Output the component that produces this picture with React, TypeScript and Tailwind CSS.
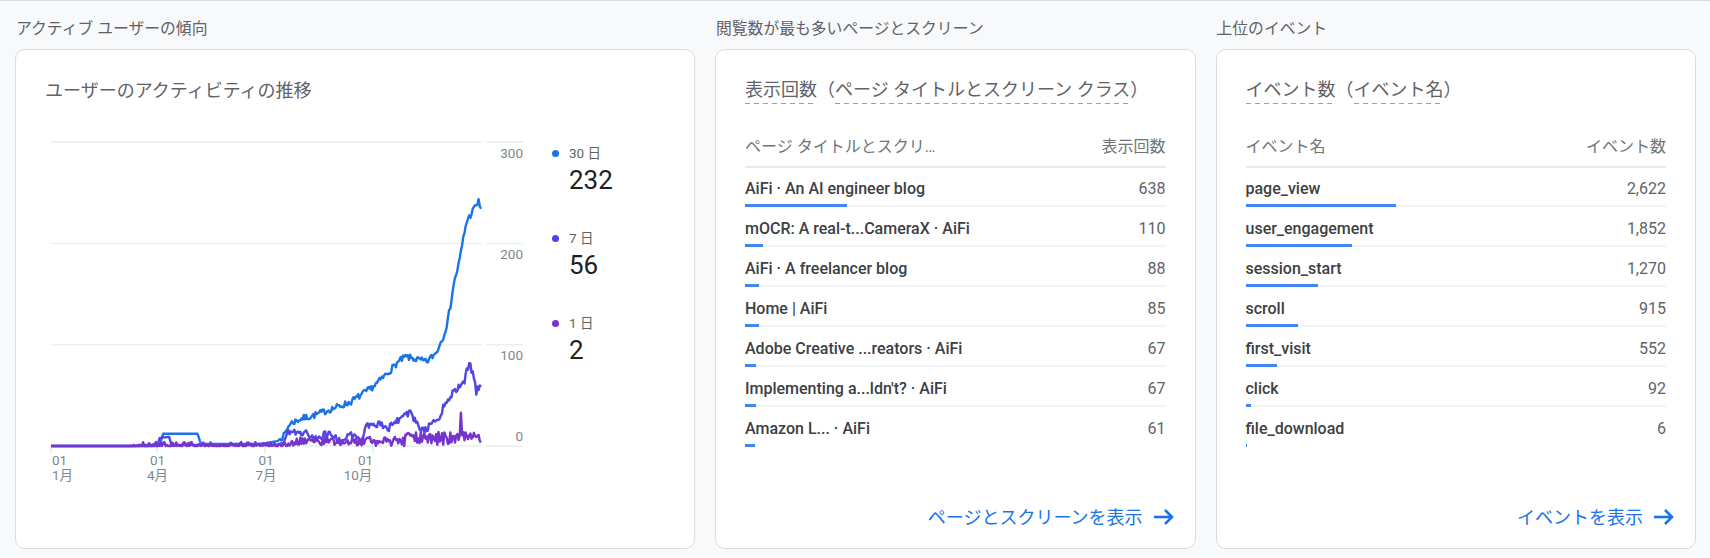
import type { ReactNode } from 'react';

type Row = { label: string; value: number };

const pages: Row[] = [
  { label: 'AiFi · An AI engineer blog', value: 638 },
  { label: 'mOCR: A real-t...CameraX · AiFi', value: 110 },
  { label: 'AiFi · A freelancer blog', value: 88 },
  { label: 'Home | AiFi', value: 85 },
  { label: 'Adobe Creative ...reators · AiFi', value: 67 },
  { label: "Implementing a...ldn't? · AiFi", value: 67 },
  { label: 'Amazon L... · AiFi', value: 61 },
];

const events: Row[] = [
  { label: 'page_view', value: 2622 },
  { label: 'user_engagement', value: 1852 },
  { label: 'session_start', value: 1270 },
  { label: 'scroll', value: 915 },
  { label: 'first_visit', value: 552 },
  { label: 'click', value: 92 },
  { label: 'file_download', value: 6 },
];

// chart geometry (svg coords)
const xd = (d: number) => 6 + (d * 430) / 364;
const yv = (v: number) => 316 - v * 1.013;

function rng(seed: number) {
  let a = seed;
  return () => {
    a = (a + 0x6d2b79f5) | 0;
    let t = Math.imul(a ^ (a >>> 15), 1 | a);
    t = (t + Math.imul(t ^ (t >>> 7), 61 | t)) ^ t;
    return ((t ^ (t >>> 14)) >>> 0) / 4294967296;
  };
}

function interp(keys: number[][], d: number) {
  for (let i = 1; i < keys.length; i++) {
    const [d0, v0] = keys[i - 1];
    const [d1, v1] = keys[i];
    if (d <= d1) return v0 + ((v1 - v0) * (d - d0)) / (d1 - d0 || 1);
  }
  return keys[keys.length - 1][1];
}

function series(keys: number[][], seed: number, amp: number) {
  const r = rng(seed);
  const pts: string[] = [];
  for (let d = 0; d < 365; d++) {
    const base = interp(keys, d);
    const n = d >= 195 && base > 3 ? (r() - 0.5) * 2 * amp * Math.min(1, base / 25 + 0.5) : 0;
    const v = Math.max(0, base + n);
    pts.push(`${xd(d).toFixed(1)},${yv(v).toFixed(1)}`);
  }
  return pts.join(' ');
}

const blue = series(
  [
    [0, 0], [71, 0], [74, 1], [92, 1], [95, 12], [124, 12], [127, 2], [176, 2], [183, 3], [192, 5],
    [197, 10], [202, 22], [212, 27], [222, 30], [236, 36], [246, 40], [253, 43], [262, 50], [270, 56],
    [276, 62], [285, 72], [293, 82], [300, 88], [308, 86], [318, 83], [326, 92], [332, 108], [336, 124],
    [341, 160], [346, 184], [349, 205], [352, 222], [356, 230], [360, 238], [362, 241], [364, 235],
  ],
  7,
  3.2,
);

const indigo = series(
  [
    [0, 0], [90, 0], [92, 8], [100, 9], [102, 1], [190, 1], [196, 3], [200, 12], [205, 14], [217, 13],
    [226, 6], [232, 12], [240, 10], [246, 2], [250, 10], [258, 12], [262, 2], [266, 20], [276, 22],
    [286, 18], [296, 28], [304, 33], [312, 18], [316, 14], [322, 22], [328, 26], [334, 44], [340, 52],
    [346, 58], [350, 64], [352, 78], [355, 80], [358, 66], [360, 54], [363, 59], [364, 57],
  ],
  19,
  3.4,
);

const purple = (() => {
  const r = rng(43);
  const pts: string[] = [];
  for (let d = 0; d < 365; d++) {
    let v = 0;
    if (d >= 70 && d < 200) v = r() < 0.55 ? 0 : r() * 4;
    else if (d >= 200 && d < 300) v = r() * 9;
    else if (d >= 300) v = 1 + r() * 13;
    if (d === 347) v = 33;
    pts.push(`${xd(d).toFixed(1)},${yv(v).toFixed(1)}`);
  }
  return pts.join(' ');
})();

function TrendChart() {
  return (
    <svg width={480} height={360} className="block shrink-0">
      {[300, 200, 100, 0].map((v) => (
        <g key={v}>
          <line x1={6} x2={436} y1={yv(v)} y2={yv(v)} stroke="#ebedf0" strokeWidth={1.5} />
          <line x1={441} x2={478} y1={yv(v)} y2={yv(v)} stroke="#ebedf0" strokeWidth={1.5} />
          <text
            x={478}
            y={v === 0 ? yv(v) - 5.3 : yv(v) + 15.6}
            textAnchor="end"
            fontSize={13.5}
            fill="#80868b"
          >
            {v}
          </text>
        </g>
      ))}
      {[6, 112, 220, 328].map((x) => (
        <line key={x} x1={x} x2={x} y1={316} y2={323} stroke="#dadce0" strokeWidth={1} />
      ))}
      <g fontSize={13.5} fill="#80868b">
        <text x={7} y={334.7}>01</text>
        <text x={7} y={349.7}>1月</text>
        <text x={112.5} y={334.7} textAnchor="middle">01</text>
        <text x={112.5} y={349.7} textAnchor="middle">4月</text>
        <text x={221} y={334.7} textAnchor="middle">01</text>
        <text x={221} y={349.7} textAnchor="middle">7月</text>
        <text x={320.5} y={334.7} textAnchor="middle">01</text>
        <text x={313} y={349.7} textAnchor="middle">10月</text>
      </g>
      <polyline points={blue} fill="none" stroke="#1a73e8" strokeWidth={2.4} strokeLinejoin="round" />
      <polyline points={indigo} fill="none" stroke="#4f46e5" strokeWidth={2.4} strokeLinejoin="round" />
      <polyline points={purple} fill="none" stroke="#7634cf" strokeWidth={2.4} strokeLinejoin="round" />
    </svg>
  );
}

const legend = [
  { label: '30 日', value: '232', dot: 'bg-[#1a73e8]' },
  { label: '7 日', value: '56', dot: 'bg-[#4f46e5]' },
  { label: '1 日', value: '2', dot: 'bg-[#7634cf]' },
];

function ActiveUsersCard() {
  return (
    <div className="h-[500px] rounded-[10px] border border-[#dadce0] bg-white px-[29px] pt-[29px]">
      <div className="h-6 text-[18px] leading-6 text-[#5f6368]">ユーザーのアクティビティの推移</div>
      <div className="mt-[27px] flex">
        <TrendChart />
        <div className="ml-[27px] mt-[14px] flex flex-col gap-[34px]">
          {legend.map((l) => (
            <div key={l.label}>
              <div className="flex h-[18px] items-center gap-[10px] text-[13.5px] text-[#5f6368]">
                <span className={`h-[7px] w-[7px] rounded-full ${l.dot}`} />
                <span>{l.label}</span>
              </div>
              <div className="mt-[3px] h-[30px] pl-[17px] text-[26px] leading-[30px] text-[#202124]">
                {l.value}
              </div>
            </div>
          ))}
        </div>
      </div>
    </div>
  );
}

function TableRow({ row, total, last }: { row: Row; total: number; last: boolean }) {
  return (
    <div className="h-10 pt-[11px]">
      <div className="flex h-5 items-center justify-between text-[16px] leading-5">
        <span className="font-medium text-[#3c4043]">{row.label}</span>
        <span className="text-[#5f6368]">{row.value.toLocaleString('en-US')}</span>
      </div>
      <div className="relative mt-[5px] h-[3px]">
        {!last && <div className="absolute inset-x-0 bottom-0 h-[2px] bg-[#f1f3f4]" />}
        <div
          className="absolute left-0 top-0 h-[3px] bg-[#4285f4]"
          style={{ width: (row.value / total) * 420 }}
        />
      </div>
    </div>
  );
}

function ArrowIcon() {
  return (
    <svg width="20" height="16" viewBox="0 0 20 16" fill="none" stroke="currentColor" strokeWidth="2.6">
      <path d="M0 8h18" />
      <path d="M11 1l7 7-7 7" />
    </svg>
  );
}

const dashed =
  'pb-[2px] bg-[linear-gradient(to_right,#9aa0a6_60%,transparent_60%)] bg-[length:9px_1.5px] bg-[position:left_bottom] bg-repeat-x';

function TableCard({
  title,
  colLeft,
  colRight,
  rows,
  total,
  linkText,
}: {
  title: ReactNode;
  colLeft: string;
  colRight: string;
  rows: Row[];
  total: number;
  linkText: string;
}) {
  return (
    <div className="flex h-[500px] flex-col rounded-[10px] border border-[#dadce0] bg-white px-[29px] pb-[19px] pt-7">
      <div className="flex h-[26px] text-[18px] leading-6 text-[#5f6368]">{title}</div>
      <div className="mt-6 flex h-10 items-center justify-between border-b-2 border-[#e8eaed] text-[16px] text-[#70757a]">
        <span>{colLeft}</span>
        <span>{colRight}</span>
      </div>
      {rows.map((r, i) => (
        <TableRow key={r.label} row={r} total={total} last={i === rows.length - 1} />
      ))}
      <div className="-mr-2 mt-auto flex h-6 items-center justify-end gap-[11px] text-[18px] text-[#1a73e8]">
        <span>{linkText}</span>
        <ArrowIcon />
      </div>
    </div>
  );
}

function SectionTitle({ children }: { children: ReactNode }) {
  return <div className="mb-2 h-6 pl-px text-[15.8px] leading-6 text-[#5f6368]">{children}</div>;
}

export default function App() {
  return (
    <div className="min-h-screen w-full border-t border-[#dadce0] bg-[#f8f9fa] pl-[15px] pr-[14px] pt-4 font-[Roboto,'Noto_Sans_CJK_JP',sans-serif]">
      <div className="grid grid-cols-[680px_1fr_1fr] gap-x-5">
        <div>
          <SectionTitle>アクティブ ユーザーの傾向</SectionTitle>
          <ActiveUsersCard />
        </div>
        <div>
          <SectionTitle>閲覧数が最も多いページとスクリーン</SectionTitle>
          <TableCard
            title={
              <>
                <span className={dashed}>表示回数</span>
                <span>（</span>
                <span className={dashed}>ページ タイトルとスクリーン クラス</span>
                <span>）</span>
              </>
            }
            colLeft="ページ タイトルとスクリ…"
            colRight="表示回数"
            rows={pages}
            total={2622}
            linkText="ページとスクリーンを表示"
          />
        </div>
        <div>
          <SectionTitle>上位のイベント</SectionTitle>
          <TableCard
            title={
              <>
                <span className={dashed}>イベント数</span>
                <span>（</span>
                <span className={dashed}>イベント名</span>
                <span>）</span>
              </>
            }
            colLeft="イベント名"
            colRight="イベント数"
            rows={events}
            total={7309}
            linkText="イベントを表示"
          />
        </div>
      </div>
    </div>
  );
}
